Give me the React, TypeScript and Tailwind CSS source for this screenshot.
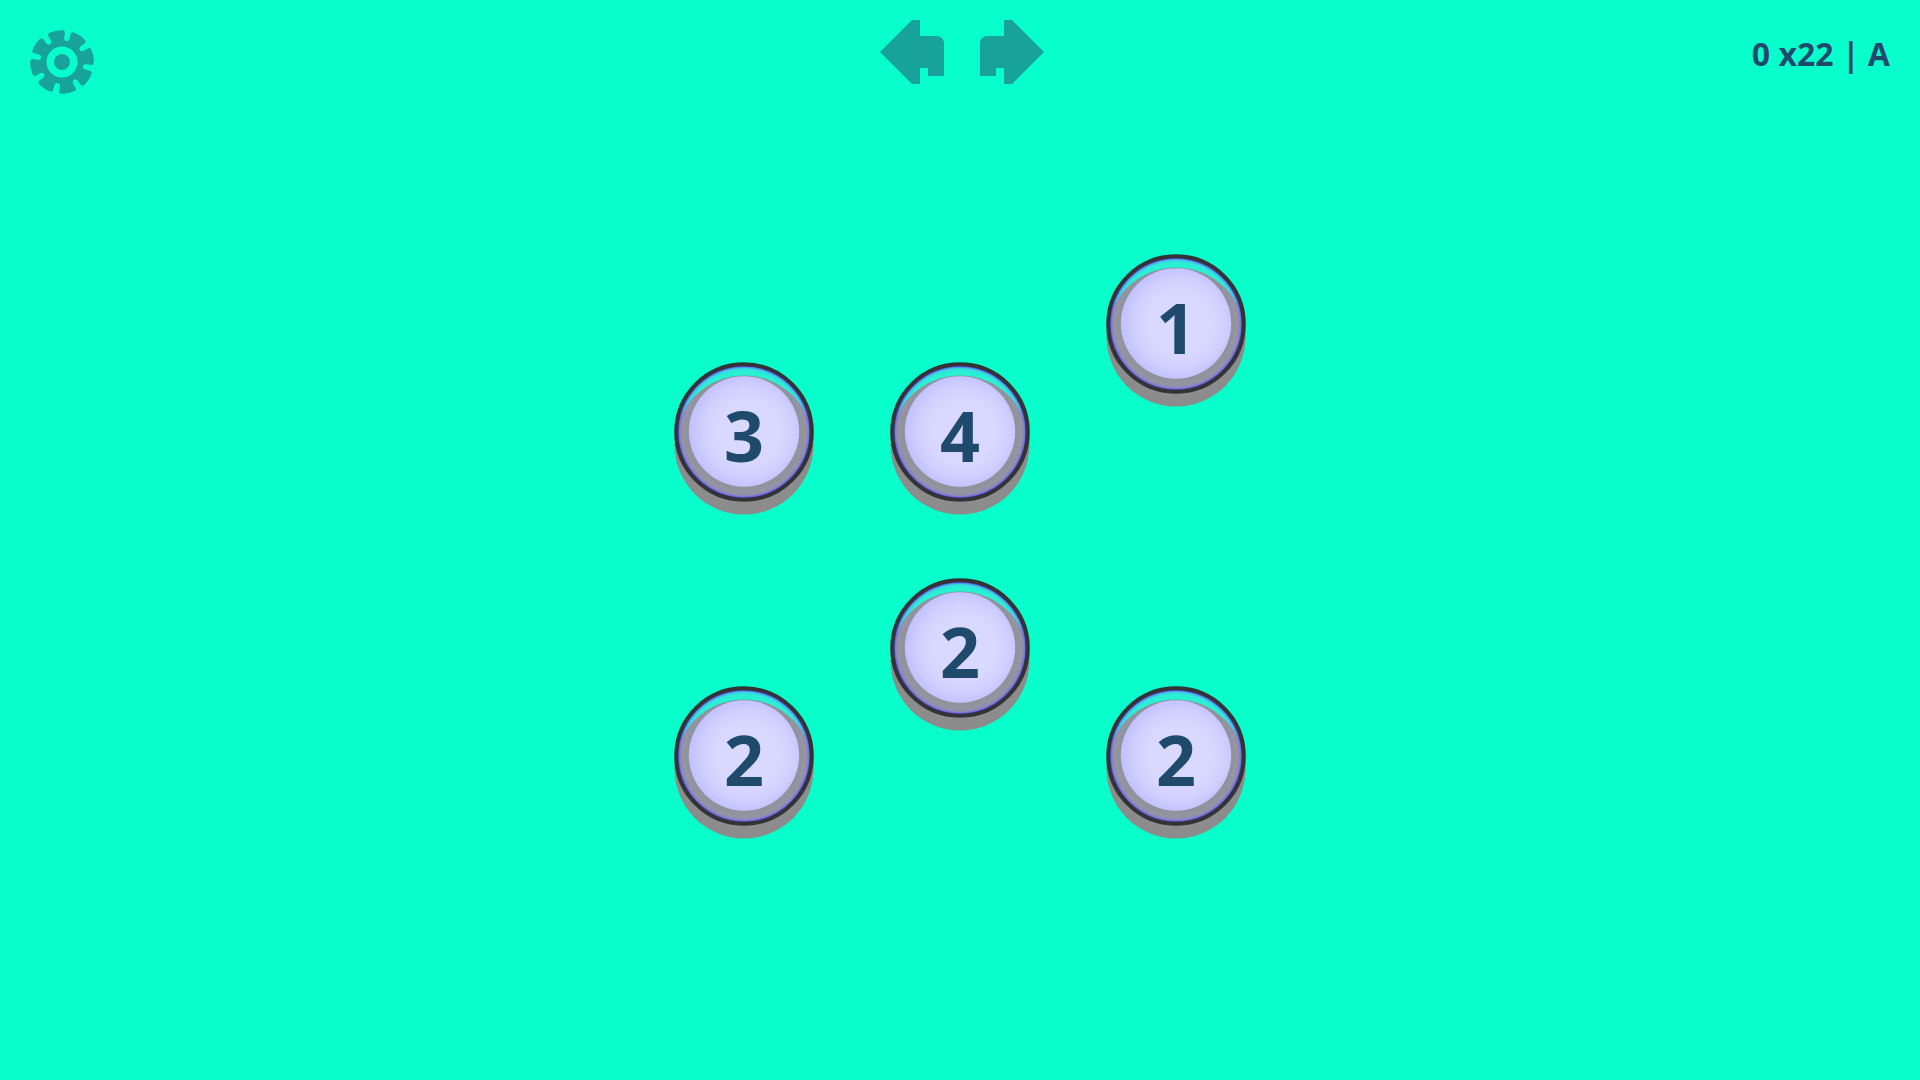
import { clsx } from "clsx";

type PuzzleNode = {
  id: string;
  count: number;
  place: string;
};

// The board is a 5 x 5 lattice, nodes sit on its cells.
const NODES: PuzzleNode[] = [
  { id: "a", count: 1, place: "col-start-5 row-start-1" },
  { id: "b", count: 3, place: "col-start-1 row-start-2" },
  { id: "c", count: 4, place: "col-start-3 row-start-2" },
  { id: "d", count: 2, place: "col-start-3 row-start-4" },
  { id: "e", count: 2, place: "col-start-1 row-start-5" },
  { id: "f", count: 2, place: "col-start-5 row-start-5" },
];

const TEETH = [0, 45, 90, 135, 180, 225, 270, 315];

const iconButtonClass = "block h-16 w-16 cursor-pointer text-[#17a39b]";

function GearIcon() {
  return (
    <svg viewBox="-32 -32 64 64" className="h-16 w-16" aria-hidden>
      <g transform="rotate(-11)" fill="currentColor">
        {TEETH.map((angle) => (
          <path
            key={angle}
            transform={`rotate(${angle})`}
            d="M-8.4-19C-6.6-20.5-6.4-22-6.8-23.5L-8.5-28.5Q-8.8-30.5-7-31Q0-33 7-31Q8.8-30.5 8.5-28.5L6.8-23.5C6.4-22 6.6-20.5 8.4-19Z"
          />
        ))}
      </g>
      <circle r="18.5" fill="none" stroke="currentColor" strokeWidth="6" />
      <circle r="8" fill="currentColor" />
    </svg>
  );
}

function UndoIcon() {
  return (
    <svg viewBox="0 0 64 64" className="h-16 w-16" aria-hidden>
      <path
        fill="currentColor"
        d="M0 32 32 0h8v16h16q8 0 8 8v32H48v-8h-8v16h-8Z"
      />
    </svg>
  );
}

function RedoIcon() {
  return (
    <svg viewBox="0 0 64 64" className="h-16 w-16" aria-hidden>
      <path
        fill="currentColor"
        d="M64 32 32 0h-8v16H8q-8 0-8 8v32h16v-8h8v16h8Z"
      />
    </svg>
  );
}

function BoardNode({ node }: { node: PuzzleNode }) {
  return (
    <button
      type="button"
      className={clsx(
        "relative flex h-[140px] w-[140px] cursor-pointer items-center justify-center rounded-full",
        node.place,
      )}
    >
      <svg
        viewBox="0 0 140 140"
        className="absolute inset-0 h-full w-full overflow-visible"
        aria-hidden
      >
        <circle cx="70" cy="83" r="69.5" fill="#8c8c8c" />
        <circle cx="70" cy="70" r="68" fill="url(#node-glow)" />
        <circle
          cx="70"
          cy="70"
          r="67.8"
          fill="none"
          stroke="#333336"
          strokeWidth="4"
        />
        <circle cx="70" cy="69.5" r="55.2" fill="url(#node-face)" />
      </svg>
      <span className="relative pt-1.5 text-[70px] leading-none">
        {node.count}
      </span>
    </button>
  );
}

function NodePaints() {
  return (
    <svg className="absolute h-0 w-0" aria-hidden>
      <defs>
        <radialGradient id="node-glow">
          <stop offset="0.78" stopColor="#c0c0ff" stopOpacity="0.08" />
          <stop offset="0.9" stopColor="#b0b0ff" stopOpacity="0.22" />
          <stop offset="0.935" stopColor="#8a86ff" stopOpacity="0.35" />
          <stop offset="0.965" stopColor="#5450ee" stopOpacity="1" />
          <stop offset="1" stopColor="#333336" />
        </radialGradient>
        <radialGradient id="node-face" cx="0.53" cy="0.5" r="0.53">
          <stop offset="0.5" stopColor="#d9d9ff" />
          <stop offset="0.75" stopColor="#d1d1ff" />
          <stop offset="1" stopColor="#c0c0ff" />
        </radialGradient>
      </defs>
    </svg>
  );
}

export default function App() {
  return (
    <div className="relative flex min-h-screen flex-col bg-[#08ffcb] font-['Noto_Sans','Open_Sans',sans-serif] font-bold text-[#1f4a6b]">
      <NodePaints />
      <header className="absolute inset-x-0 top-0 grid grid-cols-[1fr_auto_1fr] items-start px-[30px] pt-5">
        <button
          type="button"
          aria-label="Settings"
          className={clsx(iconButtonClass, "mt-[10px]")}
        >
          <GearIcon />
        </button>
        <nav className="flex gap-9 pl-1">
          <button type="button" aria-label="Undo" className={iconButtonClass}>
            <UndoIcon />
          </button>
          <button type="button" aria-label="Redo" className={iconButtonClass}>
            <RedoIcon />
          </button>
        </nav>
        <p className="justify-self-end pt-[14px] text-[32px] leading-10">
          0 x22 | A
        </p>
      </header>

      <main className="flex flex-1 items-center justify-center">
        <div className="grid grid-cols-[repeat(5,108px)] grid-rows-[repeat(5,108px)] place-items-center">
          {NODES.map((node) => (
            <BoardNode key={node.id} node={node} />
          ))}
        </div>
      </main>
    </div>
  );
}
